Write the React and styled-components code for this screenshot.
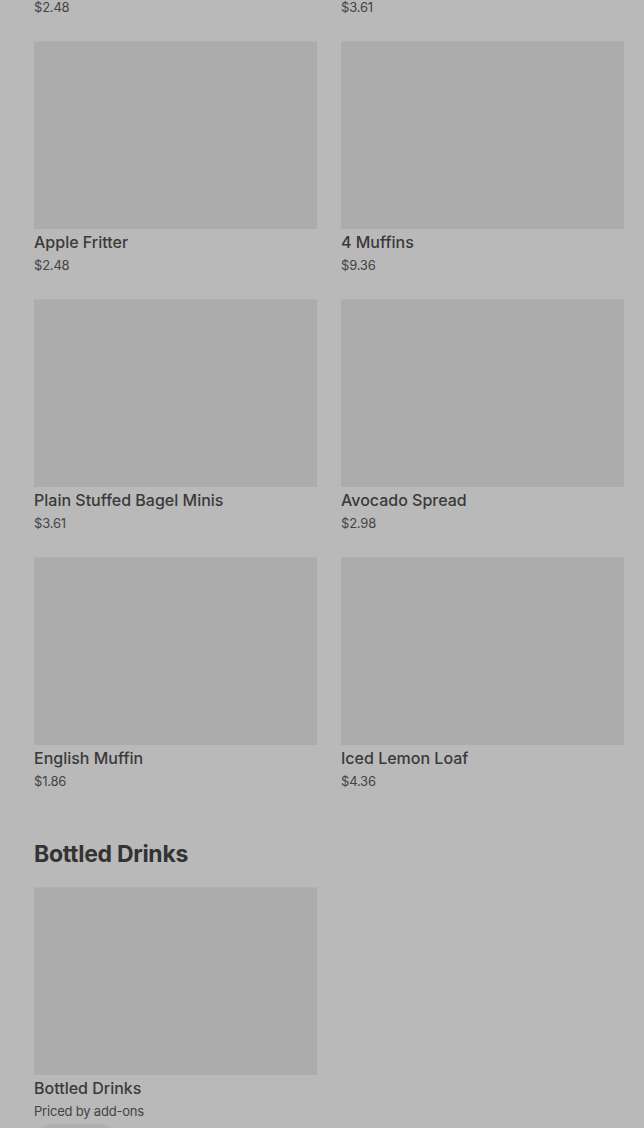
import React from "react";
import styled, { createGlobalStyle } from "styled-components";

const GlobalStyle = createGlobalStyle`
	html, body {
		margin: 0;
		padding: 0;
		background: #b9b9b9;
		font-family: Inter, "Noto Sans", sans-serif;
		overflow: hidden;
	}
`;

const Page = styled.div`
	width: 644px;
	height: 1128px;
	overflow: hidden;
	background: #b9b9b9;
`;

// the page is scrolled partway down the menu
const Scroller = styled.div`
	margin-top: -217px;
	padding: 0 20px 0 34px;
`;

const Section = styled.section`
	margin-bottom: 50px;
`;

const SectionTitle = styled.h2`
	margin: 0 0 19px;
	font-size: 23px;
	line-height: 28px;
	font-weight: 700;
	letter-spacing: -0.3px;
	color: #333333;
`;

const Grid = styled.div`
	display: grid;
	grid-template-columns: 283px 283px;
	column-gap: 24px;
	row-gap: 25px;
`;

const Item = styled.div`
	display: flex;
	flex-direction: column;
`;

const Thumb = styled.div`
	height: 188px;
	background: #acacac;
	border-top: 1px solid #b1b1b1;
	box-sizing: border-box;
`;

const Name = styled.div`
	margin-top: 3px;
	font-size: 16px;
	line-height: 20px;
	font-weight: 500;
	color: #3a3a3a;
`;

const Price = styled.div`
	margin-top: 4px;
	font-size: 13px;
	line-height: 18px;
	letter-spacing: -0.2px;
	color: #444444;
`;

const AddButton = styled.div`
	margin: 4px 0 0 6px;
	width: 72px;
	height: 20px;
	border-radius: 10px;
	background: #afafaf;
`;

const bakery = [
	{ name: "Blueberry Muffin", price: "$2.48" },
	{ name: "Cinnamon Bagel", price: "$3.61" },
	{ name: "Apple Fritter", price: "$2.48" },
	{ name: "4 Muffins", price: "$9.36" },
	{ name: "Plain Stuffed Bagel Minis", price: "$3.61" },
	{ name: "Avocado Spread", price: "$2.98" },
	{ name: "English Muffin", price: "$1.86" },
	{ name: "Iced Lemon Loaf", price: "$4.36" }
];

const drinks = [{ name: "Bottled Drinks", price: "Priced by add-ons", button: true }];

const MenuItem = ({ name, price, button }) => (
	<Item>
		<Thumb />
		<Name>{name}</Name>
		<Price>{price}</Price>
		{button && <AddButton />}
	</Item>
);

const App = () => (
	<Page>
		<GlobalStyle />
		<Scroller>
			<Section>
				<Grid>
					{bakery.map(item => (
						<MenuItem key={item.name} {...item} />
					))}
				</Grid>
			</Section>
			<Section>
				<SectionTitle>Bottled Drinks</SectionTitle>
				<Grid>
					{drinks.map(item => (
						<MenuItem key={item.name} {...item} />
					))}
				</Grid>
			</Section>
		</Scroller>
	</Page>
);

export default App;
